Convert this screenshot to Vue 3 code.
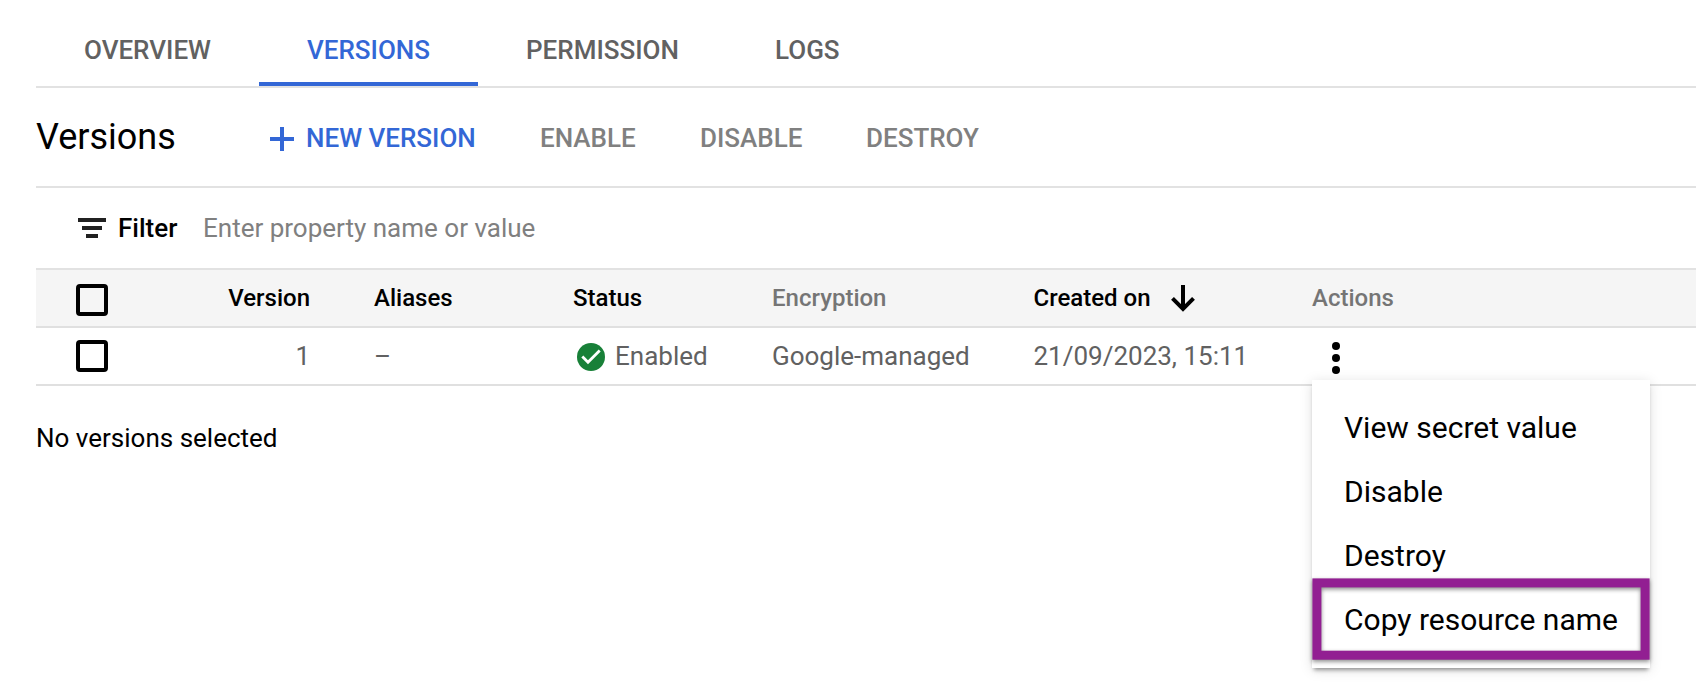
<script setup>
const tabs = [
  { label: 'OVERVIEW', key: 'overview' },
  { label: 'VERSIONS', key: 'versions', active: true },
  { label: 'PERMISSION', key: 'permission' },
  { label: 'LOGS', key: 'logs' },
]
const menu = ['View secret value', 'Disable', 'Destroy', 'Copy resource name']
</script>

<template>
  <main class="page">
    <nav class="tabs">
      <a v-for="t in tabs" :key="t.key" class="tab" :class="[t.key, { active: t.active }]"><span>{{ t.label }}</span></a>
    </nav>

    <header class="toolbar">
      <h1 class="title">Versions</h1>
      <button class="action primary">
        <svg width="24" height="24" viewBox="0 0 24 24"><path d="M10 0h4v10h10v4H14v10h-4V14H0v-4h10z" fill="#3367d6" /></svg>
        <span>NEW VERSION</span>
      </button>
      <button class="action enable">ENABLE</button>
      <button class="action disable">DISABLE</button>
      <button class="action destroy">DESTROY</button>
    </header>

    <section class="filter">
      <svg width="28" height="20" viewBox="0 0 28 20"><path d="M0 0h28v4H0zM4 8h20v4H4zM8 16h12v4H8z" fill="#212121" /></svg>
      <span class="filter-label">Filter</span>
      <span class="filter-hint">Enter property name or value</span>
    </section>

    <section class="grid">
      <div class="row head">
        <span><i class="box" /></span>
        <span class="num">Version</span>
        <span>Aliases</span>
        <span>Status</span>
        <span class="muted">Encryption</span>
        <span class="created">
          <span class="created-label">Created on</span>
          <svg width="24" height="27" viewBox="0 0 24 27"><path d="M12 0v24M1.5 13.3L12 23.8l10.5-10.5" fill="none" stroke="#000" stroke-width="4" /></svg>
        </span>
        <span class="muted">Actions</span>
      </div>
      <div class="row body">
        <span><i class="box" /></span>
        <span class="num">1</span>
        <span>–</span>
        <span class="status">
          <svg width="28" height="28" viewBox="0 0 28 28"><circle cx="14" cy="14" r="14" fill="#188038" /><path d="M5.3 13.6l5.7 5.7L22.7 7.6" fill="none" stroke="#fff" stroke-width="2.8" /></svg>
          <span>Enabled</span>
        </span>
        <span class="enc">Google-managed</span>
        <span class="date">21/09/2023, 15:11</span>
        <span class="more">
          <svg width="8" height="32" viewBox="0 0 8 32"><circle cx="4" cy="4" r="4" /><circle cx="4" cy="16" r="4" /><circle cx="4" cy="28" r="4" /></svg>
          <div class="menu">
            <div v-for="(m, i) in menu" :key="m" class="item">
              <span>{{ m }}</span>
              <svg v-if="i === 3" class="ring" width="338" height="82" viewBox="0 0 338 82"><rect x="4.9" y="4.9" width="328.2" height="72.3" fill="none" stroke="#921f92" stroke-width="9" /></svg>
            </div>
          </div>
        </span>
      </div>
    </section>

    <p class="note">No versions selected</p>
  </main>
</template>

<style>
html, body { background: #fff; overflow: hidden; }
</style>

<style scoped>
* { box-sizing: border-box; }
.page { height: 698px; padding-left: 36px; overflow: hidden; font: 400 26px/32px Roboto, sans-serif; color: #000; background: #fff; }
svg { display: block; flex: none; }
.tabs { display: flex; height: 88px; border-bottom: 2px solid #e2e2e2; }
.tab { display: flex; height: 86px; padding: 14px 48px 0; align-items: center; font-weight: 500; color: #616161; white-space: nowrap; }
.tab.active { color: #3367d6; box-shadow: inset 0 -4px #3367d6; }
.overview { width: 223px; }
.versions { width: 219px; }
.permission { width: 249px; }
.toolbar { display: flex; align-items: center; height: 100px; border-bottom: 2px solid #e2e2e2; }
.title { width: 234px; margin: 0; font: 400 36px/44px Roboto, sans-serif; }
.action { display: flex; align-items: center; border: 0; padding: 2px 0 0; background: none; font: 500 26px/32px Roboto, sans-serif; color: #808080; white-space: nowrap; }
.primary { width: 270px; gap: 12px; color: #3367d6; }
.primary svg { margin-top: 2px; }
.enable { width: 160px; }
.disable { width: 166px; }
.filter { display: flex; align-items: center; height: 80px; padding-left: 42px; }
.filter-label { width: 85px; margin-left: 12px; font-weight: 500; }
.filter-hint { color: #808080; }
.row { display: grid; grid-template-columns: 137px 137px 199px 199px 261.5px 278.5px 1fr; height: 58px; align-items: center; border-bottom: 2px solid #e0e0e0; white-space: nowrap; }
.head { height: 60px; border-top: 2px solid #e2e2e2; background: #f5f5f5; font-size: 24px; font-weight: 500; }
.body { color: #616161; }
.muted { color: #757575; }
.num { text-align: right; }
.row > :nth-child(n + 3) { margin-left: 64px; }
.box { display: block; width: 32px; height: 32px; margin-left: 40px; border: 4px solid #000; border-radius: 4px; }
.head .box { position: relative; top: 2px; }
.created { display: flex; align-items: center; }
.created-label { width: 137.5px; }
.status { display: flex; align-items: center; padding-left: 4px; gap: 10px; }
.status svg { margin-top: 2px; }
.more { position: relative; height: 56px; padding: 14px 0 0 20px; }
.menu { position: absolute; left: 0; top: 52px; width: 338px; height: 288px; padding: 16px 0; background: #fff; color: #000; font-size: 30px; box-shadow: 0 4px 4px -2px rgba(0, 0, 0, .38), 0 2px 12px rgba(0, 0, 0, .13); }
.item { position: relative; display: flex; align-items: center; height: 64px; padding-left: 32px; }
.ring { position: absolute; left: 0; top: -10px; overflow: visible; filter: drop-shadow(0 2px 2px rgba(0, 0, 0, .45)); }
.note { margin: 36px 0 0; }
</style>
